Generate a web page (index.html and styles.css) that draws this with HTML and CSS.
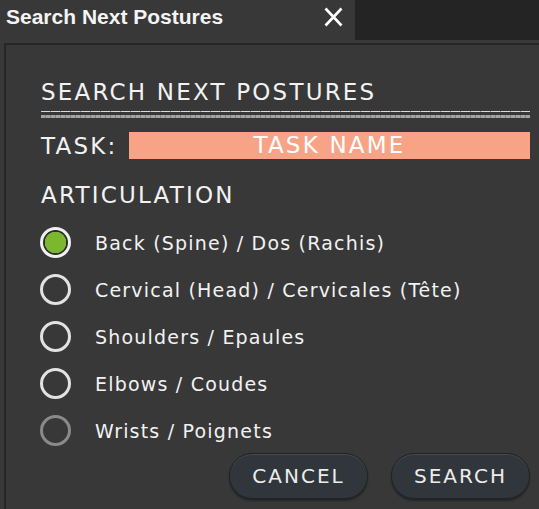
FILE: index.html
```html
<!DOCTYPE html>
<html>
<head>
<meta charset="utf-8">
<link rel="stylesheet" href="styles.css">
</head>
<body>
<div class="titlebar">
  <div class="tab">
    <span class="tab-title">Search Next Postures</span>
    <svg class="close" width="19" height="20" viewBox="0 0 19 20"><path d="M1.5 1.5 L17.5 18.5 M17.5 1.5 L1.5 18.5" stroke="#fff" stroke-width="2.6" stroke-linecap="butt"/></svg>
  </div>
  <div class="tab-rest"></div>
</div>
<div class="strip"></div>
<div class="panel">
  <h1 class="heading">SEARCH NEXT POSTURES</h1>
  <div class="rule"><div class="rule-thin"></div><div class="rule-thick"></div></div>
  <div class="task-row">
    <span class="task-label">TASK:</span>
    <div class="task-name">TASK NAME</div>
  </div>
  <h2 class="section">ARTICULATION</h2>
  <ul class="radios">
    <li class="radio-item"><span class="radio checked"></span><span class="radio-label">Back (Spine) / Dos (Rachis)</span></li>
    <li class="radio-item"><span class="radio"></span><span class="radio-label">Cervical (Head) / Cervicales (Tête)</span></li>
    <li class="radio-item"><span class="radio"></span><span class="radio-label">Shoulders / Epaules</span></li>
    <li class="radio-item"><span class="radio"></span><span class="radio-label">Elbows / Coudes</span></li>
    <li class="radio-item"><span class="radio dim"></span><span class="radio-label">Wrists / Poignets</span></li>
  </ul>
  <div class="actions">
    <button class="btn">CANCEL</button>
    <button class="btn">SEARCH</button>
  </div>
</div>
</body>
</html>
```
FILE: styles.css
```css
html, body {
  margin: 0;
  padding: 0;
  background: #383838;
  width: 539px;
  height: 509px;
  overflow: hidden;
}
body {
  font-family: "DejaVu Sans", sans-serif;
  color: #f2f2f2;
}
.titlebar {
  display: flex;
  height: 40px;
}
.tab {
  width: 355px;
  background: #383838;
  display: flex;
  align-items: center;
  box-sizing: border-box;
  padding-left: 6px;
}
.tab-title {
  font-family: "Liberation Sans", Arial, sans-serif;
  font-weight: bold;
  font-size: 21px;
  color: #f4f4f4;
  flex: 1;
  margin-top: -6px;
}
.close {
  margin-right: 12px;
  margin-top: -6px;
}
.tab-rest {
  flex: 1;
  background: #242424;
}
.strip {
  height: 3px;
  background: #3a3a3a;
}
.panel {
  margin-left: 4px;
  border-top: 2px solid #262626;
  border-left: 2px solid #262626;
  padding: 33px 9px 0 35px;
  height: 470px;
  box-sizing: border-box;
}
.heading {
  margin: 0;
  font-weight: normal;
  font-size: 23px;
  line-height: 28px;
  letter-spacing: 2.2px;
}
.rule {
  margin-top: 5px;
}
.rule-thin {
  height: 1px;
  background: repeating-linear-gradient(90deg, #d8d8d8 0 9px, #888 9px 10px);
}
.rule-thick {
  margin-top: 3px;
  height: 3px;
  background: repeating-linear-gradient(90deg, #b0b0b0 0 4px, #8a8a8a 4px 5px);
  opacity: 0.9;
}
.task-row {
  display: flex;
  align-items: center;
  margin-top: 14px;
  height: 27px;
}
.task-label {
  font-size: 23px;
  letter-spacing: 2.2px;
  width: 88px;
}
.task-name {
  flex: 1;
  height: 27px;
  background: #f9a386;
  color: #fff;
  font-size: 23px;
  letter-spacing: 2.2px;
  line-height: 27px;
  text-align: center;
}
.section {
  margin: 22px 0 0 0;
  font-weight: normal;
  font-size: 23px;
  line-height: 28px;
  letter-spacing: 2.2px;
}
.radios {
  list-style: none;
  margin: 10px 0 0 -1px;
  padding: 0;
}
.radio-item {
  display: flex;
  align-items: center;
  height: 47px;
}
.radio {
  width: 31px;
  height: 31px;
  box-sizing: border-box;
  border-radius: 50%;
  border: 3px solid #e2e2e2;
  margin-right: 24px;
  flex: none;
}
.radio.checked {
  border-color: #f0f0f0;
  background: radial-gradient(circle, #7cb82f 0 10.5px, #2c2c2c 11px);
}
.radio.dim {
  border-color: #8a8a8a;
}
.radio-label {
  font-size: 19px;
  letter-spacing: 1.2px;
}
.actions {
  display: flex;
  justify-content: flex-end;
  gap: 23px;
  margin-top: -1px;
  padding-right: 0;
}
.btn {
  width: 139px;
  height: 46px;
  border-radius: 23px;
  background: #30363b;
  border: 1px solid #1f2326;
  box-shadow: inset 0 1px 0 #454b50, 0 2px 2px rgba(0,0,0,0.35);
  color: #ececec;
  font-family: "DejaVu Sans", sans-serif;
  font-size: 20px;
  letter-spacing: 2px;
  padding: 0;
}
```
